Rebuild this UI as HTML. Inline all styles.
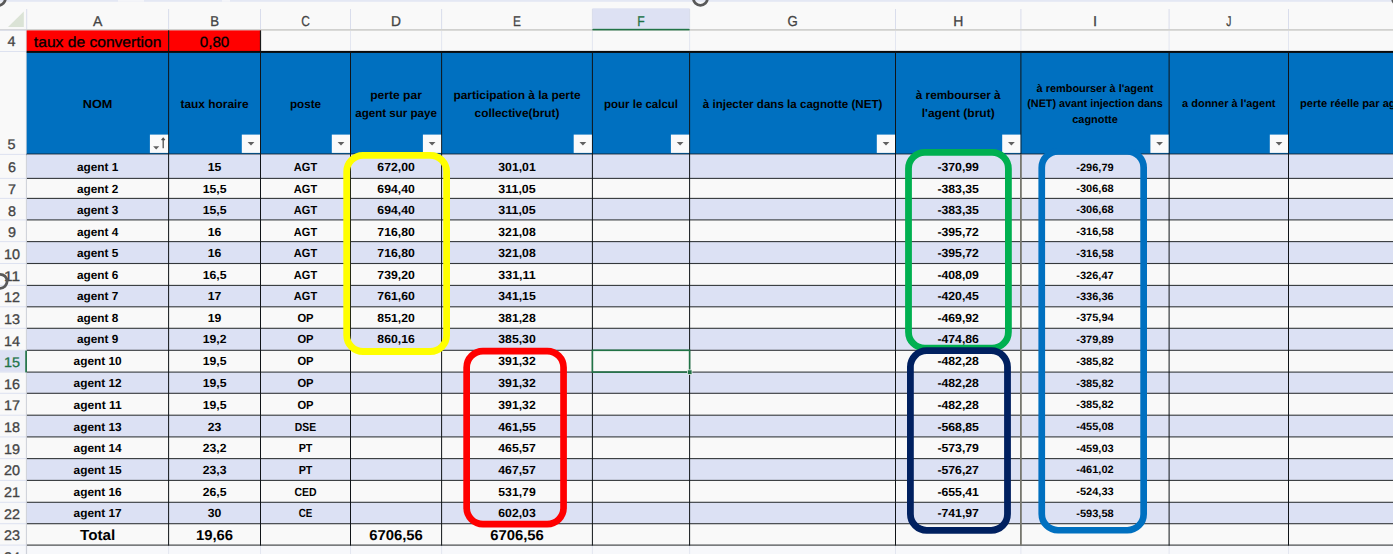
<!DOCTYPE html>
<html lang="fr">
<head>
<meta charset="utf-8">
<title>Tableau agents</title>
<style>
html,body{margin:0;padding:0;background:#f9f9f9;overflow:hidden}
svg{display:block;font-family:"Liberation Sans",sans-serif}
text{text-rendering:geometricPrecision}
</style>
</head>
<body>
<svg width="1393" height="554" viewBox="0 0 1393 554">
<rect x="0.00" y="0.00" width="1393.00" height="554.00" fill="#f9f9f9"/>
<rect x="0.00" y="0.00" width="1393.00" height="1.80" fill="#e4e8f4"/>
<rect x="118.00" y="0.00" width="26.00" height="1.80" fill="#f4f5f9"/>
<rect x="222.00" y="0.00" width="8.00" height="1.80" fill="#f4f5f9"/>
<rect x="592.40" y="8.30" width="97.20" height="20.60" fill="#dde1f3"/>
<rect x="0.00" y="29.05" width="1393.00" height="1.70" fill="#cfcfcd"/>
<rect x="592.40" y="28.80" width="97.20" height="1.60" fill="#217346"/>
<rect x="26.20" y="9.00" width="1.00" height="20.00" fill="#d9ddec"/>
<rect x="168.10" y="9.00" width="1.00" height="20.00" fill="#d9ddec"/>
<rect x="260.00" y="9.00" width="1.00" height="20.00" fill="#d9ddec"/>
<rect x="350.00" y="9.00" width="1.00" height="20.00" fill="#d9ddec"/>
<rect x="441.10" y="9.00" width="1.00" height="20.00" fill="#d9ddec"/>
<rect x="591.90" y="9.00" width="1.00" height="20.00" fill="#d9ddec"/>
<rect x="689.10" y="9.00" width="1.00" height="20.00" fill="#d9ddec"/>
<rect x="895.00" y="9.00" width="1.00" height="20.00" fill="#d9ddec"/>
<rect x="1020.40" y="9.00" width="1.00" height="20.00" fill="#d9ddec"/>
<rect x="1168.60" y="9.00" width="1.00" height="20.00" fill="#d9ddec"/>
<rect x="1288.00" y="9.00" width="1.00" height="20.00" fill="#d9ddec"/>
<path d="M23.8 11.5 L23.8 27 L8 27 Z" fill="#dbe3d6"/>
<text x="97.65" y="26.00" font-size="14.34" fill="#444444" stroke="#444444" stroke-width="0.3" text-anchor="middle" textLength="9.37" lengthAdjust="spacingAndGlyphs">A</text>
<text x="214.55" y="26.00" font-size="14.34" fill="#444444" stroke="#444444" stroke-width="0.3" text-anchor="middle" textLength="8.81" lengthAdjust="spacingAndGlyphs">B</text>
<text x="305.50" y="26.00" font-size="14.34" fill="#444444" stroke="#444444" stroke-width="0.3" text-anchor="middle" textLength="8.64" lengthAdjust="spacingAndGlyphs">C</text>
<text x="396.05" y="26.00" font-size="14.34" fill="#444444" stroke="#444444" stroke-width="0.3" text-anchor="middle" textLength="9.97" lengthAdjust="spacingAndGlyphs">D</text>
<text x="517.00" y="26.00" font-size="14.34" fill="#444444" stroke="#444444" stroke-width="0.3" text-anchor="middle" textLength="7.91" lengthAdjust="spacingAndGlyphs">E</text>
<text x="641.00" y="26.00" font-size="14.34" fill="#217346" stroke="#217346" stroke-width="0.3" text-anchor="middle" textLength="7.44" lengthAdjust="spacingAndGlyphs">F</text>
<text x="792.55" y="26.00" font-size="14.34" fill="#444444" stroke="#444444" stroke-width="0.3" text-anchor="middle" textLength="10.22" lengthAdjust="spacingAndGlyphs">G</text>
<text x="958.20" y="26.00" font-size="14.34" fill="#444444" stroke="#444444" stroke-width="0.3" text-anchor="middle" textLength="10.09" lengthAdjust="spacingAndGlyphs">H</text>
<text x="1095.00" y="26.00" font-size="14.34" fill="#444444" stroke="#444444" stroke-width="0.3" text-anchor="middle" textLength="4.08" lengthAdjust="spacingAndGlyphs">I</text>
<text x="1228.80" y="26.00" font-size="14.34" fill="#444444" stroke="#444444" stroke-width="0.3" text-anchor="middle" textLength="5.17" lengthAdjust="spacingAndGlyphs">J</text>
<rect x="0.00" y="545.60" width="1393.00" height="9.00" fill="#f7f8fb"/>
<rect x="350.00" y="31.00" width="1.00" height="19.50" fill="#e3e6f0"/>
<rect x="441.10" y="31.00" width="1.00" height="19.50" fill="#e3e6f0"/>
<rect x="591.90" y="31.00" width="1.00" height="19.50" fill="#e3e6f0"/>
<rect x="689.10" y="31.00" width="1.00" height="19.50" fill="#e3e6f0"/>
<rect x="895.00" y="31.00" width="1.00" height="19.50" fill="#e3e6f0"/>
<rect x="1020.40" y="31.00" width="1.00" height="19.50" fill="#e3e6f0"/>
<rect x="1168.60" y="31.00" width="1.00" height="19.50" fill="#e3e6f0"/>
<rect x="1288.00" y="31.00" width="1.00" height="19.50" fill="#e3e6f0"/>
<rect x="26.20" y="546.00" width="1.00" height="8.00" fill="#e3e6f0"/>
<rect x="168.10" y="546.00" width="1.00" height="8.00" fill="#e3e6f0"/>
<rect x="260.00" y="546.00" width="1.00" height="8.00" fill="#e3e6f0"/>
<rect x="350.00" y="546.00" width="1.00" height="8.00" fill="#e3e6f0"/>
<rect x="441.10" y="546.00" width="1.00" height="8.00" fill="#e3e6f0"/>
<rect x="591.90" y="546.00" width="1.00" height="8.00" fill="#e3e6f0"/>
<rect x="689.10" y="546.00" width="1.00" height="8.00" fill="#e3e6f0"/>
<rect x="895.00" y="546.00" width="1.00" height="8.00" fill="#e3e6f0"/>
<rect x="1020.40" y="546.00" width="1.00" height="8.00" fill="#e3e6f0"/>
<rect x="1168.60" y="546.00" width="1.00" height="8.00" fill="#e3e6f0"/>
<rect x="1288.00" y="546.00" width="1.00" height="8.00" fill="#e3e6f0"/>
<rect x="0.00" y="29.70" width="26.20" height="1.00" fill="#dde2f0"/>
<rect x="0.00" y="51.00" width="26.20" height="1.00" fill="#dde2f0"/>
<rect x="0.00" y="153.90" width="26.20" height="1.00" fill="#dde2f0"/>
<rect x="0.00" y="177.90" width="26.20" height="1.00" fill="#dde2f0"/>
<rect x="0.00" y="197.90" width="26.20" height="1.00" fill="#dde2f0"/>
<rect x="0.00" y="219.40" width="26.20" height="1.00" fill="#dde2f0"/>
<rect x="0.00" y="241.10" width="26.20" height="1.00" fill="#dde2f0"/>
<rect x="0.00" y="263.00" width="26.20" height="1.00" fill="#dde2f0"/>
<rect x="0.00" y="284.90" width="26.20" height="1.00" fill="#dde2f0"/>
<rect x="0.00" y="306.30" width="26.20" height="1.00" fill="#dde2f0"/>
<rect x="0.00" y="327.80" width="26.20" height="1.00" fill="#dde2f0"/>
<rect x="0.00" y="349.80" width="26.20" height="1.00" fill="#dde2f0"/>
<rect x="0.00" y="371.60" width="26.20" height="1.00" fill="#dde2f0"/>
<rect x="0.00" y="392.80" width="26.20" height="1.00" fill="#dde2f0"/>
<rect x="0.00" y="414.70" width="26.20" height="1.00" fill="#dde2f0"/>
<rect x="0.00" y="436.40" width="26.20" height="1.00" fill="#dde2f0"/>
<rect x="0.00" y="458.10" width="26.20" height="1.00" fill="#dde2f0"/>
<rect x="0.00" y="479.90" width="26.20" height="1.00" fill="#dde2f0"/>
<rect x="0.00" y="501.80" width="26.20" height="1.00" fill="#dde2f0"/>
<rect x="0.00" y="523.20" width="26.20" height="1.00" fill="#dde2f0"/>
<rect x="0.00" y="544.60" width="26.20" height="1.00" fill="#dde2f0"/>
<rect x="25.90" y="30.00" width="1.00" height="524.00" fill="#cdd0d8"/>
<rect x="0.00" y="350.80" width="26.00" height="21.00" fill="#dde1f3"/>
<rect x="25.25" y="350.60" width="1.70" height="21.80" fill="#217346"/>
<rect x="26.70" y="30.40" width="233.80" height="21.00" fill="#ff0000"/>
<rect x="168.00" y="30.40" width="1.20" height="20.60" fill="#1a1a1a"/>
<rect x="259.90" y="30.40" width="1.20" height="20.60" fill="#1a1a1a"/>
<text x="97.65" y="46.50" font-size="14.78" fill="#000" stroke="#000" stroke-width="0.3" text-anchor="middle" textLength="127.56" lengthAdjust="spacingAndGlyphs">taux de convertion</text>
<text x="214.55" y="46.50" font-size="14.78" fill="#000" stroke="#000" stroke-width="0.3" text-anchor="middle" textLength="29.56" lengthAdjust="spacingAndGlyphs">0,80</text>
<rect x="26.70" y="51.50" width="1366.30" height="102.90" fill="#0070c0"/>
<rect x="26.70" y="50.90" width="1366.30" height="2.00" fill="#0a0a0a"/>
<rect x="26.70" y="153.60" width="1366.30" height="1.60" fill="#101820"/>
<rect x="27.00" y="154.40" width="1366.30" height="24.00" fill="#dce1f4"/>
<rect x="27.00" y="198.40" width="1366.30" height="21.50" fill="#dce1f4"/>
<rect x="27.00" y="241.60" width="1366.30" height="21.90" fill="#dce1f4"/>
<rect x="27.00" y="285.40" width="1366.30" height="21.40" fill="#dce1f4"/>
<rect x="27.00" y="328.30" width="1366.30" height="22.00" fill="#dce1f4"/>
<rect x="27.00" y="372.10" width="1366.30" height="21.20" fill="#dce1f4"/>
<rect x="27.00" y="415.20" width="1366.30" height="21.70" fill="#dce1f4"/>
<rect x="27.00" y="458.60" width="1366.30" height="21.80" fill="#dce1f4"/>
<rect x="27.00" y="502.30" width="1366.30" height="21.40" fill="#dce1f4"/>
<rect x="26.90" y="177.85" width="1366.10" height="1.10" fill="#34383b"/>
<rect x="26.90" y="197.85" width="1366.10" height="1.10" fill="#34383b"/>
<rect x="26.90" y="219.35" width="1366.10" height="1.10" fill="#34383b"/>
<rect x="26.90" y="241.05" width="1366.10" height="1.10" fill="#34383b"/>
<rect x="26.90" y="262.95" width="1366.10" height="1.10" fill="#34383b"/>
<rect x="26.90" y="284.85" width="1366.10" height="1.10" fill="#34383b"/>
<rect x="26.90" y="306.25" width="1366.10" height="1.10" fill="#34383b"/>
<rect x="26.90" y="327.75" width="1366.10" height="1.10" fill="#34383b"/>
<rect x="26.90" y="349.75" width="1366.10" height="1.10" fill="#34383b"/>
<rect x="26.90" y="371.55" width="1366.10" height="1.10" fill="#34383b"/>
<rect x="26.90" y="392.75" width="1366.10" height="1.10" fill="#34383b"/>
<rect x="26.90" y="414.65" width="1366.10" height="1.10" fill="#34383b"/>
<rect x="26.90" y="436.35" width="1366.10" height="1.10" fill="#34383b"/>
<rect x="26.90" y="458.05" width="1366.10" height="1.10" fill="#34383b"/>
<rect x="26.90" y="479.85" width="1366.10" height="1.10" fill="#34383b"/>
<rect x="26.90" y="501.75" width="1366.10" height="1.10" fill="#34383b"/>
<rect x="26.90" y="523.15" width="1366.10" height="1.10" fill="#34383b"/>
<rect x="26.90" y="544.55" width="1366.10" height="1.10" fill="#34383b"/>
<rect x="168.10" y="51.50" width="1.00" height="494.10" fill="#101418"/>
<rect x="260.00" y="51.50" width="1.00" height="494.10" fill="#101418"/>
<rect x="350.00" y="51.50" width="1.00" height="494.10" fill="#101418"/>
<rect x="441.10" y="51.50" width="1.00" height="494.10" fill="#101418"/>
<rect x="591.90" y="51.50" width="1.00" height="494.10" fill="#101418"/>
<rect x="689.10" y="51.50" width="1.00" height="494.10" fill="#101418"/>
<rect x="895.00" y="51.50" width="1.00" height="494.10" fill="#101418"/>
<rect x="1020.00" y="154.40" width="1.80" height="391.20" fill="#77776e"/>
<rect x="1020.40" y="51.50" width="1.00" height="102.90" fill="#101418"/>
<rect x="1168.60" y="51.50" width="1.00" height="494.10" fill="#101418"/>
<rect x="1288.00" y="51.50" width="1.00" height="494.10" fill="#101418"/>
<text x="97.65" y="108.10" font-size="11.80" font-weight="bold" fill="#000" text-anchor="middle" textLength="29.56" lengthAdjust="spacingAndGlyphs">NOM</text>
<text x="214.55" y="108.10" font-size="11.80" font-weight="bold" fill="#000" text-anchor="middle" textLength="68.13" lengthAdjust="spacingAndGlyphs">taux horaire</text>
<text x="305.50" y="108.10" font-size="11.80" font-weight="bold" fill="#000" text-anchor="middle" textLength="31.09" lengthAdjust="spacingAndGlyphs">poste</text>
<text x="396.05" y="99.30" font-size="11.80" font-weight="bold" fill="#000" text-anchor="middle" textLength="51.63" lengthAdjust="spacingAndGlyphs">perte par</text>
<text x="396.05" y="116.90" font-size="11.80" font-weight="bold" fill="#000" text-anchor="middle" textLength="81.71" lengthAdjust="spacingAndGlyphs">agent sur paye</text>
<text x="517.00" y="99.30" font-size="11.80" font-weight="bold" fill="#000" text-anchor="middle" textLength="127.09" lengthAdjust="spacingAndGlyphs">participation à la perte</text>
<text x="517.00" y="116.90" font-size="11.80" font-weight="bold" fill="#000" text-anchor="middle" textLength="84.81" lengthAdjust="spacingAndGlyphs">collective(brut)</text>
<text x="641.00" y="108.10" font-size="11.80" font-weight="bold" fill="#000" text-anchor="middle" textLength="73.96" lengthAdjust="spacingAndGlyphs">pour le calcul</text>
<text x="792.55" y="108.10" font-size="11.80" font-weight="bold" fill="#000" text-anchor="middle" textLength="179.56" lengthAdjust="spacingAndGlyphs">à injecter dans la cagnotte (NET)</text>
<text x="958.20" y="99.30" font-size="11.80" font-weight="bold" fill="#000" text-anchor="middle" textLength="84.80" lengthAdjust="spacingAndGlyphs">à rembourser à</text>
<text x="958.20" y="116.90" font-size="11.80" font-weight="bold" fill="#000" text-anchor="middle" textLength="73.05" lengthAdjust="spacingAndGlyphs">l'agent (brut)</text>
<text x="1095.00" y="91.75" font-size="10.97" font-weight="bold" fill="#000" text-anchor="middle" textLength="116.97" lengthAdjust="spacingAndGlyphs">à rembourser à l'agent</text>
<text x="1095.00" y="107.40" font-size="10.97" font-weight="bold" fill="#000" text-anchor="middle" textLength="135.44" lengthAdjust="spacingAndGlyphs">(NET) avant injection dans</text>
<text x="1095.00" y="123.05" font-size="10.97" font-weight="bold" fill="#000" text-anchor="middle" textLength="45.53" lengthAdjust="spacingAndGlyphs">cagnotte</text>
<text x="1228.80" y="107.40" font-size="10.97" font-weight="bold" fill="#000" text-anchor="middle" textLength="93.44" lengthAdjust="spacingAndGlyphs">a donner à l'agent</text>
<text x="1300.00" y="107.40" font-size="10.97" font-weight="bold" fill="#000" text-anchor="start" textLength="112.31" lengthAdjust="spacingAndGlyphs">perte réelle par agent</text>
<rect x="149.90" y="134.60" width="18.20" height="18.30" fill="#fafafa"/>
<path d="M153.10 146.20 h6.2 l-3.1 3.3 Z" fill="#606060"/>
<path d="M163.20 138.80 v9.4 M161.60 140.20 l1.6 -1.9 l1.6 1.9" stroke="#505050" stroke-width="1.3" fill="none"/>
<rect x="241.80" y="134.60" width="18.20" height="18.30" fill="#fafafa"/>
<path d="M247.60 141.90 h6.8 l-3.4 3.7 Z" fill="#606060"/>
<rect x="331.80" y="134.60" width="18.20" height="18.30" fill="#fafafa"/>
<path d="M337.60 141.90 h6.8 l-3.4 3.7 Z" fill="#606060"/>
<rect x="422.90" y="134.60" width="18.20" height="18.30" fill="#fafafa"/>
<path d="M428.70 141.90 h6.8 l-3.4 3.7 Z" fill="#606060"/>
<rect x="573.70" y="134.60" width="18.20" height="18.30" fill="#fafafa"/>
<path d="M579.50 141.90 h6.8 l-3.4 3.7 Z" fill="#606060"/>
<rect x="670.90" y="134.60" width="18.20" height="18.30" fill="#fafafa"/>
<path d="M676.70 141.90 h6.8 l-3.4 3.7 Z" fill="#606060"/>
<rect x="876.80" y="134.60" width="18.20" height="18.30" fill="#fafafa"/>
<path d="M882.60 141.90 h6.8 l-3.4 3.7 Z" fill="#606060"/>
<rect x="1002.20" y="134.60" width="18.20" height="18.30" fill="#fafafa"/>
<path d="M1008.00 141.90 h6.8 l-3.4 3.7 Z" fill="#606060"/>
<rect x="1150.40" y="134.60" width="18.20" height="18.30" fill="#fafafa"/>
<path d="M1156.20 141.90 h6.8 l-3.4 3.7 Z" fill="#606060"/>
<rect x="1269.80" y="134.60" width="18.20" height="18.30" fill="#fafafa"/>
<path d="M1275.60 141.90 h6.8 l-3.4 3.7 Z" fill="#606060"/>
<text x="97.65" y="171.00" font-size="11.80" font-weight="bold" fill="#000" text-anchor="middle" textLength="41.32" lengthAdjust="spacingAndGlyphs">agent 1</text>
<text x="214.55" y="171.00" font-size="11.80" font-weight="bold" fill="#000" text-anchor="middle" textLength="13.57" lengthAdjust="spacingAndGlyphs">15</text>
<text x="305.50" y="171.00" font-size="11.80" font-weight="bold" fill="#000" text-anchor="middle" textLength="23.26" lengthAdjust="spacingAndGlyphs">AGT</text>
<text x="396.05" y="171.00" font-size="11.80" font-weight="bold" fill="#000" text-anchor="middle" textLength="37.37" lengthAdjust="spacingAndGlyphs">672,00</text>
<text x="517.00" y="171.00" font-size="11.80" font-weight="bold" fill="#000" text-anchor="middle" textLength="37.37" lengthAdjust="spacingAndGlyphs">301,01</text>
<text x="958.20" y="171.00" font-size="11.80" font-weight="bold" fill="#000" text-anchor="middle" textLength="41.47" lengthAdjust="spacingAndGlyphs">-370,99</text>
<text x="1095.00" y="170.50" font-size="10.62" font-weight="bold" fill="#000" text-anchor="middle" textLength="37.33" lengthAdjust="spacingAndGlyphs">-296,79</text>
<text x="97.65" y="192.75" font-size="11.80" font-weight="bold" fill="#000" text-anchor="middle" textLength="41.32" lengthAdjust="spacingAndGlyphs">agent 2</text>
<text x="214.55" y="192.75" font-size="11.80" font-weight="bold" fill="#000" text-anchor="middle" textLength="23.80" lengthAdjust="spacingAndGlyphs">15,5</text>
<text x="305.50" y="192.75" font-size="11.80" font-weight="bold" fill="#000" text-anchor="middle" textLength="23.26" lengthAdjust="spacingAndGlyphs">AGT</text>
<text x="396.05" y="192.75" font-size="11.80" font-weight="bold" fill="#000" text-anchor="middle" textLength="37.37" lengthAdjust="spacingAndGlyphs">694,40</text>
<text x="517.00" y="192.75" font-size="11.80" font-weight="bold" fill="#000" text-anchor="middle" textLength="37.37" lengthAdjust="spacingAndGlyphs">311,05</text>
<text x="958.20" y="192.75" font-size="11.80" font-weight="bold" fill="#000" text-anchor="middle" textLength="41.47" lengthAdjust="spacingAndGlyphs">-383,35</text>
<text x="1095.00" y="192.25" font-size="10.62" font-weight="bold" fill="#000" text-anchor="middle" textLength="37.33" lengthAdjust="spacingAndGlyphs">-306,68</text>
<text x="97.65" y="213.60" font-size="11.80" font-weight="bold" fill="#000" text-anchor="middle" textLength="41.32" lengthAdjust="spacingAndGlyphs">agent 3</text>
<text x="214.55" y="213.60" font-size="11.80" font-weight="bold" fill="#000" text-anchor="middle" textLength="23.80" lengthAdjust="spacingAndGlyphs">15,5</text>
<text x="305.50" y="213.60" font-size="11.80" font-weight="bold" fill="#000" text-anchor="middle" textLength="23.26" lengthAdjust="spacingAndGlyphs">AGT</text>
<text x="396.05" y="213.60" font-size="11.80" font-weight="bold" fill="#000" text-anchor="middle" textLength="37.37" lengthAdjust="spacingAndGlyphs">694,40</text>
<text x="517.00" y="213.60" font-size="11.80" font-weight="bold" fill="#000" text-anchor="middle" textLength="37.37" lengthAdjust="spacingAndGlyphs">311,05</text>
<text x="958.20" y="213.60" font-size="11.80" font-weight="bold" fill="#000" text-anchor="middle" textLength="41.47" lengthAdjust="spacingAndGlyphs">-383,35</text>
<text x="1095.00" y="213.10" font-size="10.62" font-weight="bold" fill="#000" text-anchor="middle" textLength="37.33" lengthAdjust="spacingAndGlyphs">-306,68</text>
<text x="97.65" y="235.75" font-size="11.80" font-weight="bold" fill="#000" text-anchor="middle" textLength="41.32" lengthAdjust="spacingAndGlyphs">agent 4</text>
<text x="214.55" y="235.75" font-size="11.80" font-weight="bold" fill="#000" text-anchor="middle" textLength="13.57" lengthAdjust="spacingAndGlyphs">16</text>
<text x="305.50" y="235.75" font-size="11.80" font-weight="bold" fill="#000" text-anchor="middle" textLength="23.26" lengthAdjust="spacingAndGlyphs">AGT</text>
<text x="396.05" y="235.75" font-size="11.80" font-weight="bold" fill="#000" text-anchor="middle" textLength="37.37" lengthAdjust="spacingAndGlyphs">716,80</text>
<text x="517.00" y="235.75" font-size="11.80" font-weight="bold" fill="#000" text-anchor="middle" textLength="37.37" lengthAdjust="spacingAndGlyphs">321,08</text>
<text x="958.20" y="235.75" font-size="11.80" font-weight="bold" fill="#000" text-anchor="middle" textLength="41.47" lengthAdjust="spacingAndGlyphs">-395,72</text>
<text x="1095.00" y="235.25" font-size="10.62" font-weight="bold" fill="#000" text-anchor="middle" textLength="37.33" lengthAdjust="spacingAndGlyphs">-316,58</text>
<text x="97.65" y="257.40" font-size="11.80" font-weight="bold" fill="#000" text-anchor="middle" textLength="41.32" lengthAdjust="spacingAndGlyphs">agent 5</text>
<text x="214.55" y="257.40" font-size="11.80" font-weight="bold" fill="#000" text-anchor="middle" textLength="13.57" lengthAdjust="spacingAndGlyphs">16</text>
<text x="305.50" y="257.40" font-size="11.80" font-weight="bold" fill="#000" text-anchor="middle" textLength="23.26" lengthAdjust="spacingAndGlyphs">AGT</text>
<text x="396.05" y="257.40" font-size="11.80" font-weight="bold" fill="#000" text-anchor="middle" textLength="37.37" lengthAdjust="spacingAndGlyphs">716,80</text>
<text x="517.00" y="257.40" font-size="11.80" font-weight="bold" fill="#000" text-anchor="middle" textLength="37.37" lengthAdjust="spacingAndGlyphs">321,08</text>
<text x="958.20" y="257.40" font-size="11.80" font-weight="bold" fill="#000" text-anchor="middle" textLength="41.47" lengthAdjust="spacingAndGlyphs">-395,72</text>
<text x="1095.00" y="256.90" font-size="10.62" font-weight="bold" fill="#000" text-anchor="middle" textLength="37.33" lengthAdjust="spacingAndGlyphs">-316,58</text>
<text x="97.65" y="279.05" font-size="11.80" font-weight="bold" fill="#000" text-anchor="middle" textLength="41.32" lengthAdjust="spacingAndGlyphs">agent 6</text>
<text x="214.55" y="279.05" font-size="11.80" font-weight="bold" fill="#000" text-anchor="middle" textLength="23.80" lengthAdjust="spacingAndGlyphs">16,5</text>
<text x="305.50" y="279.05" font-size="11.80" font-weight="bold" fill="#000" text-anchor="middle" textLength="23.26" lengthAdjust="spacingAndGlyphs">AGT</text>
<text x="396.05" y="279.05" font-size="11.80" font-weight="bold" fill="#000" text-anchor="middle" textLength="37.37" lengthAdjust="spacingAndGlyphs">739,20</text>
<text x="517.00" y="279.05" font-size="11.80" font-weight="bold" fill="#000" text-anchor="middle" textLength="37.37" lengthAdjust="spacingAndGlyphs">331,11</text>
<text x="958.20" y="279.05" font-size="11.80" font-weight="bold" fill="#000" text-anchor="middle" textLength="41.47" lengthAdjust="spacingAndGlyphs">-408,09</text>
<text x="1095.00" y="278.55" font-size="10.62" font-weight="bold" fill="#000" text-anchor="middle" textLength="37.33" lengthAdjust="spacingAndGlyphs">-326,47</text>
<text x="97.65" y="300.40" font-size="11.80" font-weight="bold" fill="#000" text-anchor="middle" textLength="41.32" lengthAdjust="spacingAndGlyphs">agent 7</text>
<text x="214.55" y="300.40" font-size="11.80" font-weight="bold" fill="#000" text-anchor="middle" textLength="13.57" lengthAdjust="spacingAndGlyphs">17</text>
<text x="305.50" y="300.40" font-size="11.80" font-weight="bold" fill="#000" text-anchor="middle" textLength="23.26" lengthAdjust="spacingAndGlyphs">AGT</text>
<text x="396.05" y="300.40" font-size="11.80" font-weight="bold" fill="#000" text-anchor="middle" textLength="37.37" lengthAdjust="spacingAndGlyphs">761,60</text>
<text x="517.00" y="300.40" font-size="11.80" font-weight="bold" fill="#000" text-anchor="middle" textLength="37.37" lengthAdjust="spacingAndGlyphs">341,15</text>
<text x="958.20" y="300.40" font-size="11.80" font-weight="bold" fill="#000" text-anchor="middle" textLength="41.47" lengthAdjust="spacingAndGlyphs">-420,45</text>
<text x="1095.00" y="299.90" font-size="10.62" font-weight="bold" fill="#000" text-anchor="middle" textLength="37.33" lengthAdjust="spacingAndGlyphs">-336,36</text>
<text x="97.65" y="321.85" font-size="11.80" font-weight="bold" fill="#000" text-anchor="middle" textLength="41.32" lengthAdjust="spacingAndGlyphs">agent 8</text>
<text x="214.55" y="321.85" font-size="11.80" font-weight="bold" fill="#000" text-anchor="middle" textLength="13.57" lengthAdjust="spacingAndGlyphs">19</text>
<text x="305.50" y="321.85" font-size="11.80" font-weight="bold" fill="#000" text-anchor="middle" textLength="16.17" lengthAdjust="spacingAndGlyphs">OP</text>
<text x="396.05" y="321.85" font-size="11.80" font-weight="bold" fill="#000" text-anchor="middle" textLength="37.37" lengthAdjust="spacingAndGlyphs">851,20</text>
<text x="517.00" y="321.85" font-size="11.80" font-weight="bold" fill="#000" text-anchor="middle" textLength="37.37" lengthAdjust="spacingAndGlyphs">381,28</text>
<text x="958.20" y="321.85" font-size="11.80" font-weight="bold" fill="#000" text-anchor="middle" textLength="41.47" lengthAdjust="spacingAndGlyphs">-469,92</text>
<text x="1095.00" y="321.35" font-size="10.62" font-weight="bold" fill="#000" text-anchor="middle" textLength="37.33" lengthAdjust="spacingAndGlyphs">-375,94</text>
<text x="97.65" y="343.10" font-size="11.80" font-weight="bold" fill="#000" text-anchor="middle" textLength="41.32" lengthAdjust="spacingAndGlyphs">agent 9</text>
<text x="214.55" y="343.10" font-size="11.80" font-weight="bold" fill="#000" text-anchor="middle" textLength="23.80" lengthAdjust="spacingAndGlyphs">19,2</text>
<text x="305.50" y="343.10" font-size="11.80" font-weight="bold" fill="#000" text-anchor="middle" textLength="16.17" lengthAdjust="spacingAndGlyphs">OP</text>
<text x="396.05" y="343.10" font-size="11.80" font-weight="bold" fill="#000" text-anchor="middle" textLength="37.37" lengthAdjust="spacingAndGlyphs">860,16</text>
<text x="517.00" y="343.10" font-size="11.80" font-weight="bold" fill="#000" text-anchor="middle" textLength="37.37" lengthAdjust="spacingAndGlyphs">385,30</text>
<text x="958.20" y="343.10" font-size="11.80" font-weight="bold" fill="#000" text-anchor="middle" textLength="41.47" lengthAdjust="spacingAndGlyphs">-474,86</text>
<text x="1095.00" y="342.60" font-size="10.62" font-weight="bold" fill="#000" text-anchor="middle" textLength="37.33" lengthAdjust="spacingAndGlyphs">-379,89</text>
<text x="97.65" y="365.25" font-size="11.80" font-weight="bold" fill="#000" text-anchor="middle" textLength="48.11" lengthAdjust="spacingAndGlyphs">agent 10</text>
<text x="214.55" y="365.25" font-size="11.80" font-weight="bold" fill="#000" text-anchor="middle" textLength="23.80" lengthAdjust="spacingAndGlyphs">19,5</text>
<text x="305.50" y="365.25" font-size="11.80" font-weight="bold" fill="#000" text-anchor="middle" textLength="16.17" lengthAdjust="spacingAndGlyphs">OP</text>
<text x="517.00" y="365.25" font-size="11.80" font-weight="bold" fill="#000" text-anchor="middle" textLength="37.37" lengthAdjust="spacingAndGlyphs">391,32</text>
<text x="958.20" y="365.25" font-size="11.80" font-weight="bold" fill="#000" text-anchor="middle" textLength="41.47" lengthAdjust="spacingAndGlyphs">-482,28</text>
<text x="1095.00" y="364.75" font-size="10.62" font-weight="bold" fill="#000" text-anchor="middle" textLength="37.33" lengthAdjust="spacingAndGlyphs">-385,82</text>
<text x="97.65" y="387.30" font-size="11.80" font-weight="bold" fill="#000" text-anchor="middle" textLength="48.11" lengthAdjust="spacingAndGlyphs">agent 12</text>
<text x="214.55" y="387.30" font-size="11.80" font-weight="bold" fill="#000" text-anchor="middle" textLength="23.80" lengthAdjust="spacingAndGlyphs">19,5</text>
<text x="305.50" y="387.30" font-size="11.80" font-weight="bold" fill="#000" text-anchor="middle" textLength="16.17" lengthAdjust="spacingAndGlyphs">OP</text>
<text x="517.00" y="387.30" font-size="11.80" font-weight="bold" fill="#000" text-anchor="middle" textLength="37.37" lengthAdjust="spacingAndGlyphs">391,32</text>
<text x="958.20" y="387.30" font-size="11.80" font-weight="bold" fill="#000" text-anchor="middle" textLength="41.47" lengthAdjust="spacingAndGlyphs">-482,28</text>
<text x="1095.00" y="386.80" font-size="10.62" font-weight="bold" fill="#000" text-anchor="middle" textLength="37.33" lengthAdjust="spacingAndGlyphs">-385,82</text>
<text x="97.65" y="408.95" font-size="11.80" font-weight="bold" fill="#000" text-anchor="middle" textLength="48.11" lengthAdjust="spacingAndGlyphs">agent 11</text>
<text x="214.55" y="408.95" font-size="11.80" font-weight="bold" fill="#000" text-anchor="middle" textLength="23.80" lengthAdjust="spacingAndGlyphs">19,5</text>
<text x="305.50" y="408.95" font-size="11.80" font-weight="bold" fill="#000" text-anchor="middle" textLength="16.17" lengthAdjust="spacingAndGlyphs">OP</text>
<text x="517.00" y="408.95" font-size="11.80" font-weight="bold" fill="#000" text-anchor="middle" textLength="37.37" lengthAdjust="spacingAndGlyphs">391,32</text>
<text x="958.20" y="408.95" font-size="11.80" font-weight="bold" fill="#000" text-anchor="middle" textLength="41.47" lengthAdjust="spacingAndGlyphs">-482,28</text>
<text x="1095.00" y="408.45" font-size="10.62" font-weight="bold" fill="#000" text-anchor="middle" textLength="37.33" lengthAdjust="spacingAndGlyphs">-385,82</text>
<text x="97.65" y="430.60" font-size="11.80" font-weight="bold" fill="#000" text-anchor="middle" textLength="48.11" lengthAdjust="spacingAndGlyphs">agent 13</text>
<text x="214.55" y="430.60" font-size="11.80" font-weight="bold" fill="#000" text-anchor="middle" textLength="13.57" lengthAdjust="spacingAndGlyphs">23</text>
<text x="305.50" y="430.60" font-size="11.80" font-weight="bold" fill="#000" text-anchor="middle" textLength="21.29" lengthAdjust="spacingAndGlyphs">DSE</text>
<text x="517.00" y="430.60" font-size="11.80" font-weight="bold" fill="#000" text-anchor="middle" textLength="37.37" lengthAdjust="spacingAndGlyphs">461,55</text>
<text x="958.20" y="430.60" font-size="11.80" font-weight="bold" fill="#000" text-anchor="middle" textLength="41.47" lengthAdjust="spacingAndGlyphs">-568,85</text>
<text x="1095.00" y="430.10" font-size="10.62" font-weight="bold" fill="#000" text-anchor="middle" textLength="37.33" lengthAdjust="spacingAndGlyphs">-455,08</text>
<text x="97.65" y="452.25" font-size="11.80" font-weight="bold" fill="#000" text-anchor="middle" textLength="48.11" lengthAdjust="spacingAndGlyphs">agent 14</text>
<text x="214.55" y="452.25" font-size="11.80" font-weight="bold" fill="#000" text-anchor="middle" textLength="23.80" lengthAdjust="spacingAndGlyphs">23,2</text>
<text x="305.50" y="452.25" font-size="11.80" font-weight="bold" fill="#000" text-anchor="middle" textLength="13.75" lengthAdjust="spacingAndGlyphs">PT</text>
<text x="517.00" y="452.25" font-size="11.80" font-weight="bold" fill="#000" text-anchor="middle" textLength="37.37" lengthAdjust="spacingAndGlyphs">465,57</text>
<text x="958.20" y="452.25" font-size="11.80" font-weight="bold" fill="#000" text-anchor="middle" textLength="41.47" lengthAdjust="spacingAndGlyphs">-573,79</text>
<text x="1095.00" y="451.75" font-size="10.62" font-weight="bold" fill="#000" text-anchor="middle" textLength="37.33" lengthAdjust="spacingAndGlyphs">-459,03</text>
<text x="97.65" y="473.90" font-size="11.80" font-weight="bold" fill="#000" text-anchor="middle" textLength="48.11" lengthAdjust="spacingAndGlyphs">agent 15</text>
<text x="214.55" y="473.90" font-size="11.80" font-weight="bold" fill="#000" text-anchor="middle" textLength="23.80" lengthAdjust="spacingAndGlyphs">23,3</text>
<text x="305.50" y="473.90" font-size="11.80" font-weight="bold" fill="#000" text-anchor="middle" textLength="13.75" lengthAdjust="spacingAndGlyphs">PT</text>
<text x="517.00" y="473.90" font-size="11.80" font-weight="bold" fill="#000" text-anchor="middle" textLength="37.37" lengthAdjust="spacingAndGlyphs">467,57</text>
<text x="958.20" y="473.90" font-size="11.80" font-weight="bold" fill="#000" text-anchor="middle" textLength="41.47" lengthAdjust="spacingAndGlyphs">-576,27</text>
<text x="1095.00" y="473.40" font-size="10.62" font-weight="bold" fill="#000" text-anchor="middle" textLength="37.33" lengthAdjust="spacingAndGlyphs">-461,02</text>
<text x="97.65" y="495.55" font-size="11.80" font-weight="bold" fill="#000" text-anchor="middle" textLength="48.11" lengthAdjust="spacingAndGlyphs">agent 16</text>
<text x="214.55" y="495.55" font-size="11.80" font-weight="bold" fill="#000" text-anchor="middle" textLength="23.80" lengthAdjust="spacingAndGlyphs">26,5</text>
<text x="305.50" y="495.55" font-size="11.80" font-weight="bold" fill="#000" text-anchor="middle" textLength="22.05" lengthAdjust="spacingAndGlyphs">CED</text>
<text x="517.00" y="495.55" font-size="11.80" font-weight="bold" fill="#000" text-anchor="middle" textLength="37.37" lengthAdjust="spacingAndGlyphs">531,79</text>
<text x="958.20" y="495.55" font-size="11.80" font-weight="bold" fill="#000" text-anchor="middle" textLength="41.47" lengthAdjust="spacingAndGlyphs">-655,41</text>
<text x="1095.00" y="495.05" font-size="10.62" font-weight="bold" fill="#000" text-anchor="middle" textLength="37.33" lengthAdjust="spacingAndGlyphs">-524,33</text>
<text x="97.65" y="517.20" font-size="11.80" font-weight="bold" fill="#000" text-anchor="middle" textLength="48.11" lengthAdjust="spacingAndGlyphs">agent 17</text>
<text x="214.55" y="517.20" font-size="11.80" font-weight="bold" fill="#000" text-anchor="middle" textLength="13.57" lengthAdjust="spacingAndGlyphs">30</text>
<text x="305.50" y="517.20" font-size="11.80" font-weight="bold" fill="#000" text-anchor="middle" textLength="13.61" lengthAdjust="spacingAndGlyphs">CE</text>
<text x="517.00" y="517.20" font-size="11.80" font-weight="bold" fill="#000" text-anchor="middle" textLength="37.37" lengthAdjust="spacingAndGlyphs">602,03</text>
<text x="958.20" y="517.20" font-size="11.80" font-weight="bold" fill="#000" text-anchor="middle" textLength="41.47" lengthAdjust="spacingAndGlyphs">-741,97</text>
<text x="1095.00" y="516.70" font-size="10.62" font-weight="bold" fill="#000" text-anchor="middle" textLength="37.33" lengthAdjust="spacingAndGlyphs">-593,58</text>
<text x="97.65" y="540.10" font-size="14.69" font-weight="bold" fill="#000" text-anchor="middle" textLength="35.31" lengthAdjust="spacingAndGlyphs">Total</text>
<text x="214.55" y="540.10" font-size="14.34" font-weight="bold" fill="#000" text-anchor="middle" textLength="37.17" lengthAdjust="spacingAndGlyphs">19,66</text>
<text x="396.05" y="540.10" font-size="14.34" font-weight="bold" fill="#000" text-anchor="middle" textLength="53.66" lengthAdjust="spacingAndGlyphs">6706,56</text>
<text x="517.00" y="540.10" font-size="14.34" font-weight="bold" fill="#000" text-anchor="middle" textLength="53.66" lengthAdjust="spacingAndGlyphs">6706,56</text>
<text x="11.60" y="46.40" font-size="13.98" fill="#444444" stroke="#444444" stroke-width="0.3" text-anchor="middle" textLength="8.01" lengthAdjust="spacingAndGlyphs">4</text>
<text x="11.60" y="149.30" font-size="13.98" fill="#444444" stroke="#444444" stroke-width="0.3" text-anchor="middle" textLength="8.01" lengthAdjust="spacingAndGlyphs">5</text>
<text x="12.00" y="172.30" font-size="13.98" fill="#444444" stroke="#444444" stroke-width="0.3" text-anchor="middle" textLength="8.01" lengthAdjust="spacingAndGlyphs">6</text>
<text x="12.00" y="193.95" font-size="13.98" fill="#444444" stroke="#444444" stroke-width="0.3" text-anchor="middle" textLength="8.01" lengthAdjust="spacingAndGlyphs">7</text>
<text x="12.00" y="215.60" font-size="13.98" fill="#444444" stroke="#444444" stroke-width="0.3" text-anchor="middle" textLength="8.01" lengthAdjust="spacingAndGlyphs">8</text>
<text x="12.00" y="237.25" font-size="13.98" fill="#444444" stroke="#444444" stroke-width="0.3" text-anchor="middle" textLength="8.01" lengthAdjust="spacingAndGlyphs">9</text>
<text x="12.00" y="258.90" font-size="13.98" fill="#444444" stroke="#444444" stroke-width="0.3" text-anchor="middle" textLength="16.02" lengthAdjust="spacingAndGlyphs">10</text>
<text x="12.00" y="280.55" font-size="13.98" fill="#444444" stroke="#444444" stroke-width="0.3" text-anchor="middle" textLength="16.02" lengthAdjust="spacingAndGlyphs">11</text>
<text x="12.00" y="302.20" font-size="13.98" fill="#444444" stroke="#444444" stroke-width="0.3" text-anchor="middle" textLength="16.02" lengthAdjust="spacingAndGlyphs">12</text>
<text x="12.00" y="323.85" font-size="13.98" fill="#444444" stroke="#444444" stroke-width="0.3" text-anchor="middle" textLength="16.02" lengthAdjust="spacingAndGlyphs">13</text>
<text x="12.00" y="345.50" font-size="13.98" fill="#444444" stroke="#444444" stroke-width="0.3" text-anchor="middle" textLength="16.02" lengthAdjust="spacingAndGlyphs">14</text>
<text x="12.00" y="367.15" font-size="13.98" fill="#217346" stroke="#217346" stroke-width="0.3" text-anchor="middle" textLength="16.02" lengthAdjust="spacingAndGlyphs">15</text>
<text x="12.00" y="388.80" font-size="13.98" fill="#444444" stroke="#444444" stroke-width="0.3" text-anchor="middle" textLength="16.02" lengthAdjust="spacingAndGlyphs">16</text>
<text x="12.00" y="410.45" font-size="13.98" fill="#444444" stroke="#444444" stroke-width="0.3" text-anchor="middle" textLength="16.02" lengthAdjust="spacingAndGlyphs">17</text>
<text x="12.00" y="432.10" font-size="13.98" fill="#444444" stroke="#444444" stroke-width="0.3" text-anchor="middle" textLength="16.02" lengthAdjust="spacingAndGlyphs">18</text>
<text x="12.00" y="453.75" font-size="13.98" fill="#444444" stroke="#444444" stroke-width="0.3" text-anchor="middle" textLength="16.02" lengthAdjust="spacingAndGlyphs">19</text>
<text x="12.00" y="475.40" font-size="13.98" fill="#444444" stroke="#444444" stroke-width="0.3" text-anchor="middle" textLength="16.02" lengthAdjust="spacingAndGlyphs">20</text>
<text x="12.00" y="497.05" font-size="13.98" fill="#444444" stroke="#444444" stroke-width="0.3" text-anchor="middle" textLength="16.02" lengthAdjust="spacingAndGlyphs">21</text>
<text x="12.00" y="518.70" font-size="13.98" fill="#444444" stroke="#444444" stroke-width="0.3" text-anchor="middle" textLength="16.02" lengthAdjust="spacingAndGlyphs">22</text>
<text x="12.00" y="540.35" font-size="13.98" fill="#444444" stroke="#444444" stroke-width="0.3" text-anchor="middle" textLength="16.02" lengthAdjust="spacingAndGlyphs">23</text>
<text x="12.00" y="562.00" font-size="13.98" fill="#444444" stroke="#444444" stroke-width="0.3" text-anchor="middle" textLength="16.02" lengthAdjust="spacingAndGlyphs">24</text>
<rect x="592.40" y="350.30" width="97.20" height="21.80" fill="none" stroke="#217346" stroke-width="1.6"/>
<rect x="687.40" y="369.90" width="4.60" height="4.60" fill="#217346" stroke="#f9f9f9" stroke-width="0.7"/>
<rect x="346.70" y="155.40" width="99.90" height="196.10" rx="16.30" ry="16.30" fill="none" stroke="#ffff00" stroke-width="6.8"/>
<rect x="466.65" y="351.15" width="96.90" height="172.90" rx="16.30" ry="16.30" fill="none" stroke="#ff0000" stroke-width="6.7"/>
<rect x="908.50" y="152.40" width="99.90" height="195.80" rx="16.30" ry="16.30" fill="none" stroke="#00b050" stroke-width="6.8"/>
<rect x="910.40" y="350.70" width="97.10" height="179.60" rx="16.30" ry="16.30" fill="none" stroke="#002060" stroke-width="6.8"/>
<rect x="1041.75" y="151.35" width="101.90" height="378.90" rx="16.30" ry="16.30" fill="none" stroke="#0070c0" stroke-width="6.7"/>
<circle cx="-1.6" cy="-1.6" r="7.0" fill="none" stroke="#595959" stroke-width="2.8"/>
<circle cx="700.4" cy="-1.6" r="7.0" fill="none" stroke="#595959" stroke-width="2.8"/>
<circle cx="0.1" cy="281.3" r="7.0" fill="none" stroke="#595959" stroke-width="2.8"/>
<circle cx="1399.6" cy="-1.6" r="7.0" fill="none" stroke="#595959" stroke-width="2.8"/>
</svg>
</body>
</html>
